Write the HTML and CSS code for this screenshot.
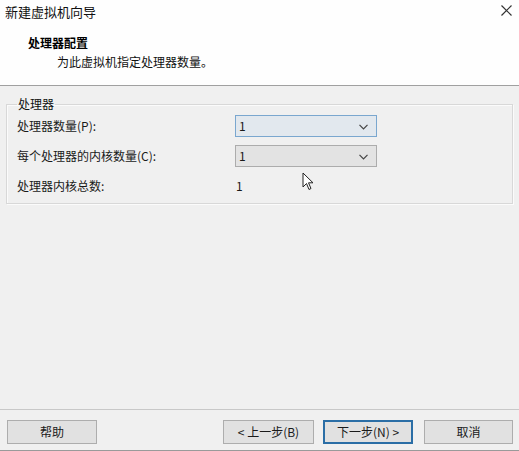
FILE: index.html
```html
<!DOCTYPE html>
<html lang="zh-CN">
<head>
<meta charset="utf-8">
<title>新建虚拟机向导</title>
<link rel="stylesheet" href="styles.css">
</head>
<body>
<div class="window">
  <header class="header">
    <div class="titlebar">
      <span class="title">新建虚拟机向导</span>
      <svg class="close" width="11" height="11" viewBox="0 0 11 11"><path d="M0.5 0.5 L10.5 10.5 M10.5 0.5 L0.5 10.5" stroke="#333" stroke-width="1.2" fill="none"/></svg>
    </div>
    <div class="page-title">处理器配置</div>
    <div class="page-sub">为此虚拟机指定处理器数量。</div>
  </header>
  <main class="main">
    <fieldset class="group">
      <legend class="legend">处理器</legend>
      <div class="rows">
        <div class="label">处理器数量(P):</div>
        <div class="combo combo-focus"><span class="combo-val">1</span><svg class="chev" width="9" height="6" viewBox="0 0 9 6"><path d="M0.5 0.8 L4.5 4.8 L8.5 0.8" stroke="#444" stroke-width="1.2" fill="none"/></svg></div>
        <div class="label">每个处理器的内核数量(C):</div>
        <div class="combo"><span class="combo-val">1</span><svg class="chev" width="9" height="6" viewBox="0 0 9 6"><path d="M0.5 0.8 L4.5 4.8 L8.5 0.8" stroke="#444" stroke-width="1.2" fill="none"/></svg></div>
        <div class="label">处理器内核总数:</div>
        <div class="value">1</div>
      </div>
    </fieldset>
    <svg class="cursor" width="12" height="19" viewBox="0 0 12 19"><path d="M1 1 L1 15 L4.5 11.5 L7 17.5 L9 16.5 L6.5 10.8 L11 10.8 Z" fill="#fff" stroke="#222" stroke-width="1"/></svg>
  </main>
  <footer class="footer">
    <button class="btn">帮助</button>
    <div class="nav">
      <button class="btn btn-back">&lt; 上一步(B)</button>
      <button class="btn btn-default">下一步(N) &gt;</button>
      <button class="btn btn-cancel">取消</button>
    </div>
  </footer>
</div>
</body>
</html>
```
FILE: styles.css
```css
* { box-sizing: border-box; }
html, body {
  margin: 0;
  padding: 0;
  width: 519px;
  height: 451px;
  overflow: hidden;
}
body {
  font-family: "Noto Sans CJK SC", "Microsoft YaHei", sans-serif;
  font-size: 12px;
  color: #1a1a1a;
  background: #f0f0f0;
}
.window {
  width: 519px;
  height: 451px;
  display: flex;
  flex-direction: column;
  border-bottom: 1px solid #9a9a9a;
}
.header {
  height: 86px;
  background: #fefefe;
  border-bottom: 1px solid #a0a0a0;
  flex: none;
}
.titlebar {
  height: 24px;
  display: flex;
  align-items: center;
  justify-content: space-between;
  padding: 0 7px 0 5px;
}
.title {
  font-size: 13px;
  line-height: 24px;
  color: #111;
}
.close { margin-top: -3px; }
.page-title {
  margin-top: 11px;
  padding-left: 28px;
  font-weight: bold;
  line-height: 16px;
  color: #000;
}
.page-sub {
  margin-top: 3px;
  padding-left: 57px;
  line-height: 16px;
  color: #111;
}
.main {
  flex: 1;
  position: relative;
  padding: 11px 6px 0 6px;
}
.group {
  margin: 0;
  padding: 0 10px 6px 10px;
  border: 1px solid #d8d8d8;
  box-shadow: inset 1px 1px 0 #fbfbfb, 1px 1px 0 #fbfbfb;
  min-width: 0;
}
.legend {
  padding: 0 1px;
  line-height: 14px;
  color: #111;
}
.rows {
  display: grid;
  grid-template-columns: 218px 142px;
  grid-auto-rows: 22px;
  row-gap: 8px;
  padding-top: 4px;
  align-items: center;
}
.label {
  line-height: 22px;
  color: #1a1a1a;
}
.combo {
  height: 22px;
  display: flex;
  align-items: center;
  justify-content: space-between;
  padding: 0 8px 0 3px;
  border: 1px solid #acacac;
  background: #e3e3e3;
}
.combo-focus {
  border-color: #7aa7cf;
  background: #e2e8ee;
}
.combo-val { line-height: 20px; }
.chev { margin-top: 1px; }
.value {
  padding-left: 1px;
  line-height: 22px;
}
.cursor {
  position: absolute;
  left: 302px;
  top: 86px;
}
.footer {
  height: 41px;
  flex: none;
  border-top: 1px solid #c8c8c8;
  display: flex;
  justify-content: space-between;
  align-items: flex-start;
  padding: 10px 6px 0 7px;
}
.nav {
  display: flex;
}
.btn {
  height: 24px;
  width: 90px;
  font-family: inherit;
  font-size: 12px;
  color: #1a1a1a;
  background: #e1e1e1;
  border: 1px solid #adadad;
  padding: 0;
  line-height: 20px;
}
.btn-back { width: 91px; margin-right: 9px; }
.btn-default {
  border: 2px solid #2b6ea6;
  margin-right: 11px;
}
.btn-cancel { width: 89px; }
```
